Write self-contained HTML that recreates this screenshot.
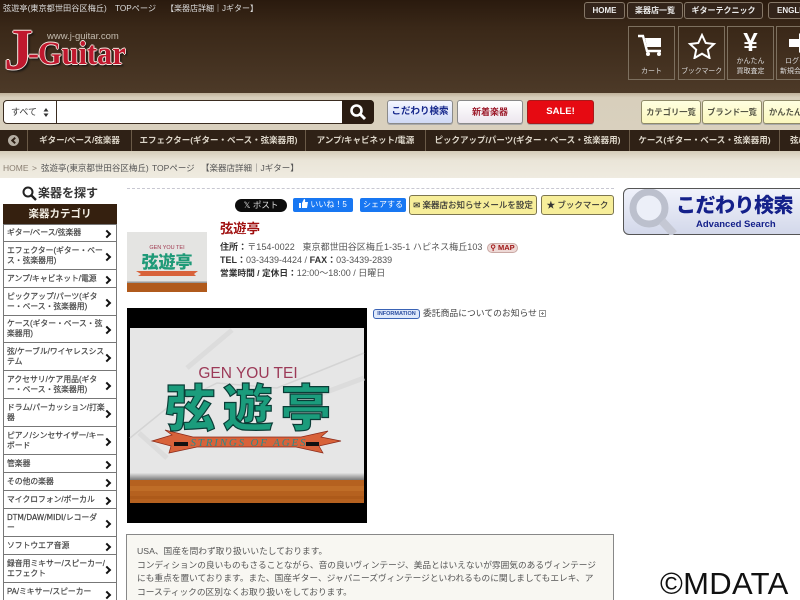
<!DOCTYPE html>
<html lang="ja"><head><meta charset="utf-8"><title>弦遊亭</title>
<style>
*{box-sizing:border-box}
html,body{margin:0;padding:0;width:800px;height:600px;overflow:hidden;background:#fff}
body{position:relative;font-family:"Liberation Sans","Noto Sans CJK JP",sans-serif;font-size:9px;color:#444}
.a{position:absolute;white-space:nowrap}
.hd{left:0;top:0;width:800px;height:94px;background:linear-gradient(180deg,#2a1a0e 0,#3a2818 30%,#4d3a28 100%)}
.band{left:0;top:93px;width:800px;height:38px;background:linear-gradient(180deg,#bfb29c 0,#d8cfbc 12%,#d9d0be 100%)}
.nav{left:0;top:130px;width:800px;height:21px;background:#2f2116;color:#ddd6c9;font-weight:bold;font-size:8.500px;line-height:21px}
.nav span{position:absolute;top:0;height:21px;text-align:center;border-left:1px solid #6a5a48}
.bc{left:0;top:151px;width:800px;height:27px;background:linear-gradient(180deg,#d5ccb9 0,#eae5d8 35%,#efebe0 100%)}
.bt{top:162px;font-size:8.500px;line-height:13px;color:#555}
.tt{top:3px;font-size:8.200px;line-height:12px;color:#ddd}
.tb{top:2px;height:17px;border:1px solid #857767;border-radius:3px;color:#eee;font-weight:bold;font-size:8px;line-height:15px;text-align:center;background:#33241a}
.ic{top:26px;width:47px;height:54px;border:1px solid #7d705f;color:#ddd;font-size:7px;text-align:center;line-height:10px}
.ic svg{position:absolute;left:8px;top:6px}
.ic i{position:absolute;left:0;right:0;font-style:normal}
.btn{top:100px;height:24px;border-radius:3px;text-align:center;line-height:22px;font-weight:bold;font-size:9.500px;border:1px solid #8a8a8a;box-shadow:0 1px 0 #aaa}
.y{background:linear-gradient(180deg,#ffffe0,#fbf7bd);color:#554;border:1px solid #8f8a68;font-size:8.300px}
.cat{left:3px;width:114px;background:#fff;border:1px solid #777;color:#444;font-size:7.800px;line-height:10px;font-weight:normal;-webkit-text-stroke:.2px #444;padding:0 0 0 3px;display:flex;align-items:center}
.cat:after{content:"";position:absolute;right:6px;top:50%;width:4px;height:4px;margin-top:-2px;border-top:2px solid #111;border-right:2px solid #111;transform:rotate(45deg)}
.sb{top:198px;height:14px;color:#fff;font-size:8px;text-align:center;line-height:14px;border-radius:2px}
.yb{top:195px;height:20px;background:#f7ee9a;border:1px solid #7c7650;border-radius:3px;color:#333;font-size:8.500px;line-height:18px;text-align:center;-webkit-text-stroke:.15px #333}
.lg{font-family:'Liberation Serif',serif;font-weight:bold;color:#c0182e;text-shadow:1px 0 0 #f2e8e0,-1px 0 0 #f2e8e0,0 1px 0 #f2e8e0,0 -1px 0 #f2e8e0,2px 2px 2px #111}
</style></head><body>
<div class="a hd"></div>
<div class="a tt" style="left:3px">弦遊亭(東京都世田谷区梅丘)</div>
<div class="a tt" style="left:115px">TOPページ</div>
<div class="a tt" style="left:166px;font-size:8px">【楽器店詳細｜Jギター】</div>
<div class="a" style="left:47px;top:31px;color:#c4bcb0;font-size:9.500px;line-height:11px">www.j-guitar.com</div>
<div class="a lg" style="left:4px;top:20px;font-size:58px;line-height:60px">J</div>
<div class="a lg" style="left:28px;top:36px;font-size:33px;line-height:36px">-</div>
<div class="a lg" style="left:38px;top:36px;font-size:33px;line-height:36px;transform:scaleX(.92);transform-origin:0 0">Guitar</div>

<div class="a tb" style="left:584px;width:41px">HOME</div>
<div class="a tb" style="left:627px;width:56px">楽器店一覧</div>
<div class="a tb" style="left:684px;width:79px">ギターテクニック</div>
<div class="a tb" style="left:768px;width:50px;text-align:left;padding-left:8px">ENGLISH</div>

<div class="a ic" style="left:628px"><svg width="30" height="26" viewBox="0 0 30 26"><path d="M1 3h5l4 15h14" fill="none" stroke="#fff" stroke-width="2.400"/><path d="M8 5h16v9H10z" fill="#fff"/><circle cx="11" cy="21" r="2" fill="#fff"/><circle cx="22" cy="21" r="2" fill="#fff"/></svg><i style="top:40px">カート</i></div>
<div class="a ic" style="left:678px"><svg width="30" height="26" viewBox="0 0 30 26"><path d="M15 2l3.700 8 8.300 1-6.200 5.700L22.500 25 15 20.700 7.500 25l1.700-8.300L3 11l8.300-1z" fill="none" stroke="#fff" stroke-width="2"/></svg><i style="top:40px;letter-spacing:-.2px">ブックマーク</i></div>
<div class="a ic" style="left:727px"><i style="top:1px;font-size:26px;line-height:28px;font-weight:bold;color:#fff">¥</i><i style="top:30px">かんたん</i><i style="top:40px">買取査定</i></div>
<div class="a ic" style="left:776px;width:47px"><svg width="24" height="22" viewBox="0 0 24 22" style="left:12px;top:5px"><path d="M0 7h10V1l11 10-11 10v-6H0z" fill="#fff"/></svg><i style="top:30px;text-align:left;padding-left:8px">ログイン</i><i style="top:40px;text-align:left;padding-left:3px">新規会員</i></div>

<div class="a band"></div>
<div class="a" style="left:3px;top:100px;width:371px;height:24px;border:1px solid #3a2c20;border-radius:4px;background:#fff"></div>
<div class="a" style="left:11px;top:106px;font-size:9px;color:#333;line-height:12px">すべて</div>
<svg class="a" style="left:43px;top:108px" width="6" height="9" viewBox="0 0 6 9"><path d="M3 0l2.500 3.500h-5zM3 9L.5 5.500h5z" fill="#333"/></svg>
<div class="a" style="left:56px;top:100px;width:1px;height:24px;background:#3a2c20"></div>
<div class="a" style="left:342px;top:100px;width:32px;height:24px;background:#2a1c12;border-radius:0 4px 4px 0"></div>
<svg class="a" style="left:349px;top:103px" width="18" height="18" viewBox="0 0 18 18"><circle cx="7.500" cy="7.500" r="5" fill="none" stroke="#fff" stroke-width="2.600"/><path d="M11 11l5 5" stroke="#fff" stroke-width="3"/></svg>
<div class="a btn" style="left:387px;width:66px;background:linear-gradient(180deg,#f4f6ff,#cfd9f5);color:#16288c">こだわり検索</div>
<div class="a btn" style="left:457px;width:66px;background:linear-gradient(180deg,#fff,#ece6ee);color:#9c1b2b;font-size:9px">新着楽器</div>
<div class="a btn" style="left:527px;width:67px;background:#e60a12;color:#fff;border-color:#a81a1a">SALE!</div>
<div class="a btn y" style="left:641px;width:60px">カテゴリ一覧</div>
<div class="a btn y" style="left:702px;width:60px">ブランド一覧</div>
<div class="a btn y" style="left:763px;width:60px;text-align:left;padding-left:5px">かんたん買取</div>

<div class="a nav">
<span style="left:27px;width:104px">ギター/ベース/弦楽器</span>
<span style="left:131px;width:174px">エフェクター(ギター・ベース・弦楽器用)</span>
<span style="left:305px;width:120px">アンプ/キャビネット/電源</span>
<span style="left:425px;width:204px">ピックアップ/パーツ(ギター・ベース・弦楽器用)</span>
<span style="left:629px;width:150px">ケース(ギター・ベース・弦楽器用)</span>
<span style="left:779px;width:60px;text-align:left;padding-left:10px">弦/ケーブル</span>
</div>
<div class="a" style="left:8px;top:135px;width:11px;height:11px;border-radius:50%;background:#b5aea3"></div>
<div class="a" style="left:12px;top:138px;width:5px;height:5px;border-left:2px solid #2f2116;border-bottom:2px solid #2f2116;transform:rotate(45deg)"></div>

<div class="a bc"></div>
<div class="a bt" style="left:3px;color:#8a7f72">HOME</div>
<div class="a bt" style="left:32px;color:#8a7f72">&gt;</div>
<div class="a bt" style="left:41px">弦遊亭(東京都世田谷区梅丘)</div>
<div class="a bt" style="left:152px">TOPページ</div>
<div class="a bt" style="left:201px">【楽器店詳細｜Jギター】</div>

<svg class="a" style="left:22px;top:186px" width="15" height="15" viewBox="0 0 15 15"><circle cx="6" cy="6" r="4.500" fill="none" stroke="#222" stroke-width="2"/><path d="M9.500 9.500l4.500 4.500" stroke="#222" stroke-width="2.400"/></svg>
<div class="a" style="left:38px;top:185px;font-size:12px;font-weight:bold;color:#333;line-height:16px">楽器を探す</div>
<div class="a" style="left:3px;top:204px;width:114px;height:20px;background:#35200f;color:#f3eee4;text-align:center;font-size:10.500px;font-weight:bold;line-height:20px">楽器カテゴリ</div>

<div class="a cat" style="top:224px;height:18px"><span>ギター/ベース/弦楽器</span></div>
<div class="a cat" style="top:241px;height:29px"><span>エフェクター(ギター・ベー<br>ス・弦楽器用)</span></div>
<div class="a cat" style="top:269px;height:19px"><span>アンプ/キャビネット/電源</span></div>
<div class="a cat" style="top:287px;height:29px"><span>ピックアップ/パーツ(ギタ<br>ー・ベース・弦楽器用)</span></div>
<div class="a cat" style="top:315px;height:28px"><span>ケース(ギター・ベース・弦<br>楽器用)</span></div>
<div class="a cat" style="top:342px;height:29px"><span>弦/ケーブル/ワイヤレスシス<br>テム</span></div>
<div class="a cat" style="top:370px;height:29px"><span>アクセサリ/ケア用品(ギタ<br>ー・ベース・弦楽器用)</span></div>
<div class="a cat" style="top:398px;height:29px"><span>ドラム/パーカッション/打楽<br>器</span></div>
<div class="a cat" style="top:426px;height:29px"><span>ピアノ/シンセサイザー/キー<br>ボード</span></div>
<div class="a cat" style="top:454px;height:19px"><span>管楽器</span></div>
<div class="a cat" style="top:472px;height:19px"><span>その他の楽器</span></div>
<div class="a cat" style="top:490px;height:19px"><span>マイクロフォン/ボーカル</span></div>
<div class="a cat" style="top:508px;height:29px"><span><span style="font-family:'DejaVu Sans';font-size:7.500px">DTM/DAW/MIDI/</span>レコーダ<br>ー</span></div>
<div class="a cat" style="top:536px;height:19px"><span>ソフトウエア音源</span></div>
<div class="a cat" style="top:554px;height:29px"><span>録音用ミキサー/スピーカー/<br>エフェクト</span></div>
<div class="a cat" style="top:582px;height:24px;padding-bottom:5px"><span>PA/ミキサー/スピーカー</span></div>

<div class="a" style="left:127px;top:188px;width:487px;border-top:1px dashed #c8c8d2"></div>

<div class="a" style="left:235px;top:199px;width:52px;height:13px;background:#0c0c0c;border-radius:7px;color:#ddd;font-size:8.500px;text-align:center;line-height:13px">𝕏 ポスト</div>
<div class="a sb" style="left:293px;width:60px;background:#1877f2"><svg width="9" height="9" viewBox="0 0 9 9" style="vertical-align:-1px"><path d="M0 4h2v5H0zM3 4l2-4c1 0 1.500 1 1 3h3l-1 6H3z" fill="#fff"/></svg> いいね！5</div>
<div class="a sb" style="left:360px;width:46px;background:#1877f2">シェアする</div>
<div class="a yb" style="left:409px;width:128px">✉ 楽器店お知らせメールを設定</div>
<div class="a yb" style="left:541px;width:73px">★ ブックマーク</div>

<div class="a" style="left:220px;top:221px;color:#a01010;font-size:13.300px;font-weight:bold;line-height:16px">弦遊亭</div>
<div class="a" style="left:220px;top:241px;font-size:9px;line-height:13px;color:#555;letter-spacing:.06px"><b style="color:#333">住所：</b>〒154-0022 &nbsp; 東京都世田谷区梅丘1-35-1 ハピネス梅丘103</div>
<div class="a" style="left:487px;top:243px;width:31px;height:10px;background:#eed9d6;border:1px solid #c9a8a4;border-radius:5px;color:#a01818;font-size:7.500px;font-weight:bold;text-align:center;line-height:8px">⚲ MAP</div>
<div class="a" style="left:220px;top:254px;font-size:9px;line-height:13px;color:#555"><b style="color:#333">TEL：</b>03-3439-4424 / <b style="color:#333">FAX：</b>03-3439-2839</div>
<div class="a" style="left:220px;top:267px;font-size:9px;line-height:13px;color:#555"><b style="color:#333;font-size:8.700px">営業時間 / 定休日：</b>12:00～18:00 / 日曜日</div>

<svg class="a" style="left:127px;top:232px" width="80" height="60" viewBox="0 0 80 60">
<rect width="80" height="60" fill="#e4e4e2"/>
<text x="40" y="17" font-family="Liberation Sans" font-size="5.500" fill="#a03a50" text-anchor="middle">GEN YOU TEI</text>
<text x="40" y="36" font-family="Noto Sans CJK JP" font-weight="900" font-size="17" fill="#1f9a78" text-anchor="middle">弦遊亭</text>
<path d="M9 39h62l-4 3 2 2H11l3-2z" fill="#d8623a"/>
<rect y="51" width="80" height="9" fill="#b05a1c"/><rect y="49.500" width="80" height="1.500" fill="#999"/>
</svg>

<svg class="a" style="left:127px;top:308px" width="240" height="215" viewBox="0 0 240 215">
<defs><linearGradient id="sh" x1="0" y1="0" x2="0" y2="1"><stop offset="0" stop-color="#e2e2e2"/><stop offset="1" stop-color="#7a7a7a"/></linearGradient></defs>
<rect width="240" height="215" fill="#000"/>
<rect x="3" y="20" width="234" height="155" fill="#e6e6e6"/>
<path d="M3 130L40 100 90 75 150 80 200 60 237 45" fill="none" stroke="#d4d4d4" stroke-width="1.500"/>
<path d="M60 60L105 22M12 125L40 150M170 95L237 70" fill="none" stroke="#dcdcdc" stroke-width="5"/>
<rect x="3" y="165" width="234" height="7" fill="url(#sh)"/>
<text x="121" y="70" font-family="Liberation Sans" font-size="15.500" fill="#9c3a58" text-anchor="middle">GEN YOU TEI</text>
<path d="M25 133l20-6-7-5 28 7h108l27-6-7 6 20 4-22 5 4 7-27-6H70l-28 6 2-7z" fill="#d8623a" stroke="#8a2a1a" stroke-width=".7"/>
<rect x="47" y="134" width="14" height="4" fill="#111"/><rect x="179" y="134" width="13" height="4" fill="#111"/>
<text x="121" y="138" font-family="Liberation Serif" font-style="italic" font-size="11" fill="#2c8a88" text-anchor="middle" textLength="115">STRINGS OF AGES</text>
<text x="121" y="118" font-family="Noto Sans CJK JP" font-weight="900" font-size="50" fill="#1b9c7c" stroke="#0a3c36" stroke-width="1.200" text-anchor="middle" textLength="166">弦遊亭</text>
<rect x="3" y="172" width="234" height="23" fill="#b5611f"/>
<rect x="3" y="178" width="234" height="5" fill="#c97a30" opacity=".5"/><rect x="3" y="188" width="234" height="3" fill="#a85518" opacity=".6"/>
</svg>

<div class="a" style="left:373px;top:309px;width:47px;height:10px;border:1px solid #3a63b5;border-radius:3px;background:#dfe9fb;color:#2a4da0;font-size:5.500px;font-weight:bold;text-align:center;line-height:8px">INFORMATION</div>
<div class="a" style="left:423px;top:307px;font-size:8.800px;color:#444;line-height:13px">委託商品についてのお知らせ</div>
<div class="a" style="left:539px;top:310px;width:7px;height:7px;border:1px solid #999"></div>
<div class="a" style="left:541px;top:313px;width:3px;height:1px;background:#888"></div>
<div class="a" style="left:542px;top:312px;width:1px;height:3px;background:#888"></div>

<div class="a" style="left:623px;top:188px;width:190px;height:47px;border:1px solid #555;border-radius:6px;background:linear-gradient(180deg,#f0f2fb,#d3d8ea)"></div>
<svg class="a" style="left:624px;top:189px" width="70" height="46" viewBox="0 0 70 46"><circle cx="25" cy="19" r="16" fill="#eceff8" stroke="#bcc0cd" stroke-width="7"/><path d="M38 32l12 13" stroke="#c5c8d4" stroke-width="8"/></svg>
<div class="a" style="left:676px;top:194px;color:#14208a;font-size:20px;font-weight:900;line-height:24px;letter-spacing:-.5px">こだわり検索</div>
<div class="a" style="left:696px;top:219px;color:#14208a;font-size:9.500px;font-weight:bold;line-height:12px">Advanced Search</div>

<div class="a" style="left:126px;top:534px;width:488px;height:80px;background:#f8f7f2;border:1px solid #888"></div>
<div class="a" style="left:137px;top:545px;font-size:8.700px;line-height:13.500px;color:#555">USA、国産を問わず取り扱いいたしております。<br>コンディションの良いものもさることながら、音の良いヴィンテージ、美品とはいえないが雰囲気のあるヴィンテージ<br>にも重点を置いております。また、国産ギター、ジャパニーズヴィンテージといわれるものに関しましてもエレキ、ア<br>コースティックの区別なくお取り扱いをしております。<br>修理、調整に関しましてもお気軽にお問い合わせください。</div>

<div class="a" style="left:660px;top:568px;width:140px;height:32px;background:#fff"></div>
<div class="a" style="left:660px;top:568px;color:#111;font-size:31px;line-height:32px;letter-spacing:.3px">©MDATA</div>
</body></html>
